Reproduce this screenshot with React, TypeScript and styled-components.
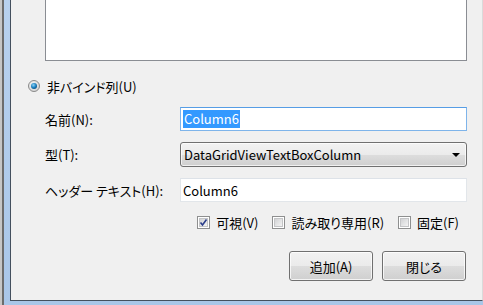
import React from "react";
import styled, { createGlobalStyle } from "styled-components";

const GlobalStyle = createGlobalStyle`
  html, body {
    margin: 0;
    padding: 0;
    background: #b4cde9;
  }
  body {
    font-family: "Noto Sans CJK JP", sans-serif;
    font-size: 13px;
    font-feature-settings: "palt";
    color: #000;
  }
`;

const Frame = styled.div`
  width: 483px;
  height: 305px;
  box-sizing: border-box;
  overflow: hidden;
  display: flex;
  padding: 0 0 4px 10px;
  background: linear-gradient(#b8d1ee, #a9c6e8);
  box-shadow: inset 2px 0 0 #c6c6c6, inset 4px 0 0 #6c6c6c;
`;

const Client = styled.div`
  flex: 1;
  box-sizing: border-box;
  display: flex;
  flex-direction: column;
  padding: 0 15px 0 34px;
  background: #f0f0f0;
  border-left: 1px solid #44505e;
  border-bottom: 1px solid #44505e;
  border-right: 1px solid #dadada;
`;

const ListBox = styled.div`
  height: 61px;
  box-sizing: border-box;
  background: #fff;
  border: 1px solid #8a8d93;
  border-top: none;
`;

const RadioRow = styled.label`
  display: flex;
  align-items: center;
  gap: 7px;
  height: 18px;
  margin: 16px 0 0 -17px;
`;

const Form = styled.div`
  display: grid;
  grid-template-columns: 135px 1fr;
  row-gap: 11px;
  align-items: center;
  margin-top: 12px;
`;

const Label = styled.span`
  white-space: nowrap;
`;

const TextBox = styled.div<{ focused?: boolean }>`
  height: 24px;
  box-sizing: border-box;
  display: flex;
  align-items: center;
  padding: 0 2px;
  background: #fff;
  border: 1px solid ${(p) => (p.focused ? "#7eb4ea" : "#e2e6ea")};
  border-top-color: ${(p) => (p.focused ? "#569de5" : "#dde2e8")};
`;

const Selected = styled.span`
  background: #3399ff;
  color: #fff;
  padding: 0 1px;
  line-height: 18px;
`;

const Combo = styled.div`
  height: 25px;
  box-sizing: border-box;
  display: flex;
  align-items: center;
  justify-content: space-between;
  padding: 0 6px 0 3px;
  border: 1px solid #707070;
  border-radius: 3px;
  background: linear-gradient(#f2f2f2 0%, #ebebeb 50%, #dddddd 51%, #cfcfcf 100%);
  box-shadow: inset 0 0 0 1px rgba(255, 255, 255, 0.7);
`;

const Arrow = styled.span`
  width: 0;
  height: 0;
  border-left: 4px solid transparent;
  border-right: 4px solid transparent;
  border-top: 4px solid #000;
`;

const CheckRow = styled.div`
  display: flex;
  justify-content: flex-end;
  align-items: center;
  gap: 14px;
  margin-top: 11px;
  padding-right: 8px;
  height: 18px;
`;

const Check = styled.label`
  display: flex;
  align-items: center;
  gap: 6px;
`;

const Buttons = styled.div`
  display: flex;
  justify-content: flex-end;
  gap: 9px;
  margin-top: 20px;
  padding-right: 1px;
`;

const Button = styled.button`
  width: 84px;
  height: 30px;
  box-sizing: border-box;
  font: inherit;
  color: #000;
  border: 1px solid #707070;
  border-radius: 3px;
  background: linear-gradient(#f2f2f2 0%, #ebebeb 50%, #dddddd 51%, #cfcfcf 100%);
  box-shadow: inset 0 0 0 1px rgba(255, 255, 255, 0.75);
  padding: 0;
`;

const RadioIcon = () => (
  <svg width="12" height="12" viewBox="0 0 12 12">
    <defs>
      <radialGradient id="rbg" cx="0.4" cy="0.35" r="0.7">
        <stop offset="0" stopColor="#f4f4f4" />
        <stop offset="1" stopColor="#d2d2d2" />
      </radialGradient>
      <radialGradient id="rdot" cx="0.4" cy="0.35" r="0.7">
        <stop offset="0" stopColor="#8fd3f5" />
        <stop offset="0.6" stopColor="#1a7fc0" />
        <stop offset="1" stopColor="#0b4e7e" />
      </radialGradient>
    </defs>
    <circle cx="6" cy="6" r="5.5" fill="url(#rbg)" stroke="#8a8a8a" />
    <circle cx="6" cy="6" r="3" fill="url(#rdot)" />
  </svg>
);

const CheckIcon = ({ checked }: { checked?: boolean }) => (
  <svg width="13" height="13" viewBox="0 0 13 13">
    <defs>
      <linearGradient id="cbg" x1="0" y1="0" x2="1" y2="1">
        <stop offset="0" stopColor="#cfd0d2" />
        <stop offset="1" stopColor="#f6f6f6" />
      </linearGradient>
    </defs>
    <rect x="0.5" y="0.5" width="12" height="12" fill="#fff" stroke="#8e8f8f" />
    <rect x="2.5" y="2.5" width="8" height="8" fill="url(#cbg)" stroke="#c4c5c7" />
    {checked && (
      <path d="M3.5 6.5 L5.5 9 L9.5 3.5" fill="none" stroke="#2a3d8a" strokeWidth="1.6" />
    )}
  </svg>
);

export default function App() {
  return (
    <>
      <GlobalStyle />
      <Frame>
        <Client>
          <ListBox />
          <RadioRow>
            <RadioIcon />
            <span>非バインド列(U)</span>
          </RadioRow>
          <Form>
            <Label>名前(N):</Label>
            <TextBox focused>
              <Selected>Column6</Selected>
            </TextBox>
            <Label>型(T):</Label>
            <Combo>
              <span>DataGridViewTextBoxColumn</span>
              <Arrow />
            </Combo>
            <Label>ヘッダー テキスト(H):</Label>
            <TextBox>
              <span>Column6</span>
            </TextBox>
          </Form>
          <CheckRow>
            <Check>
              <CheckIcon checked />
              <span>可視(V)</span>
            </Check>
            <Check>
              <CheckIcon />
              <span>読み取り専用(R)</span>
            </Check>
            <Check>
              <CheckIcon />
              <span>固定(F)</span>
            </Check>
          </CheckRow>
          <Buttons>
            <Button>追加(A)</Button>
            <Button>閉じる</Button>
          </Buttons>
        </Client>
      </Frame>
    </>
  );
}
